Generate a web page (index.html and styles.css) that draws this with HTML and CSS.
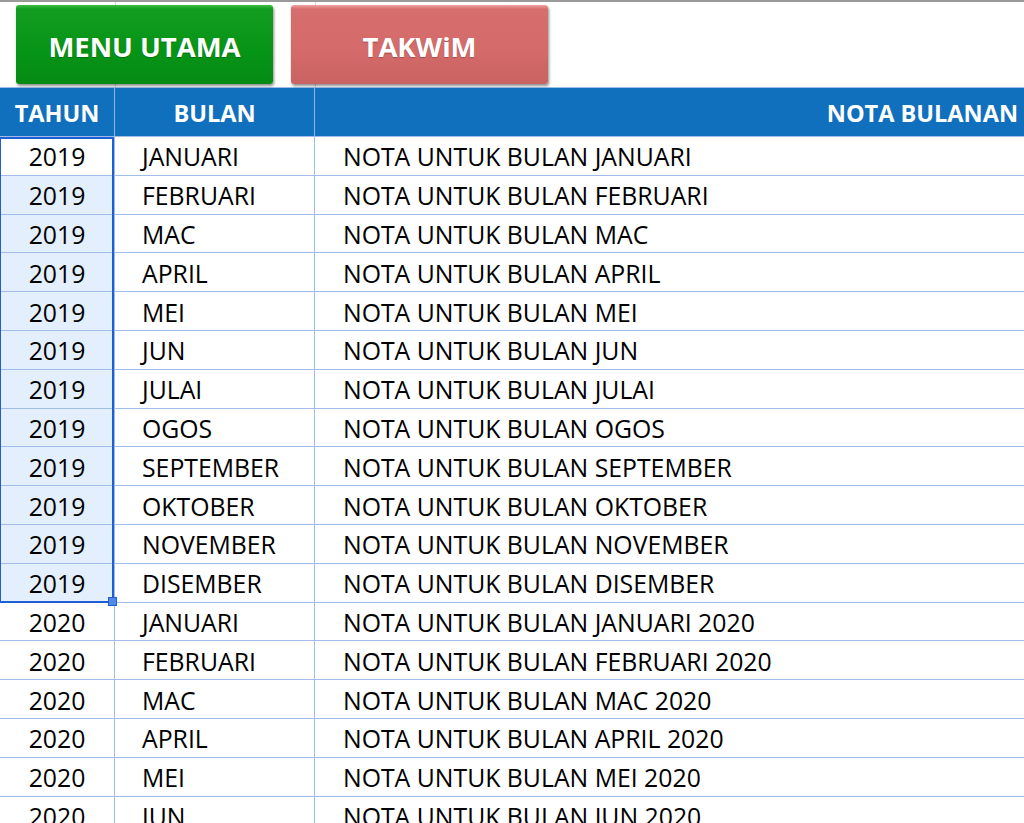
FILE: index.html
```html
<!DOCTYPE html>
<html>
<head>
<meta charset="utf-8">
<link rel="stylesheet" href="styles.css">
</head>
<body>
<div class="sheet">
  <div class="toolbar">
    <div class="gl gl1"></div>
    <div class="gl gl2"></div>
    <button class="btn green">MENU UTAMA</button>
    <button class="btn red">TAKWiM</button>
  </div>
  <div class="table">
    <div class="hd c1">TAHUN</div>
    <div class="hd c2">BULAN</div>
    <div class="hd c3">NOTA BULANAN</div>

    <div class="cell yr">2019</div><div class="cell">JANUARI</div><div class="cell nt">NOTA UNTUK BULAN JANUARI</div>
    <div class="cell yr sel">2019</div><div class="cell">FEBRUARI</div><div class="cell nt">NOTA UNTUK BULAN FEBRUARI</div>
    <div class="cell yr sel">2019</div><div class="cell">MAC</div><div class="cell nt">NOTA UNTUK BULAN MAC</div>
    <div class="cell yr sel">2019</div><div class="cell">APRIL</div><div class="cell nt">NOTA UNTUK BULAN APRIL</div>
    <div class="cell yr sel">2019</div><div class="cell">MEI</div><div class="cell nt">NOTA UNTUK BULAN MEI</div>
    <div class="cell yr sel">2019</div><div class="cell">JUN</div><div class="cell nt">NOTA UNTUK BULAN JUN</div>
    <div class="cell yr sel">2019</div><div class="cell">JULAI</div><div class="cell nt">NOTA UNTUK BULAN JULAI</div>
    <div class="cell yr sel">2019</div><div class="cell">OGOS</div><div class="cell nt">NOTA UNTUK BULAN OGOS</div>
    <div class="cell yr sel">2019</div><div class="cell">SEPTEMBER</div><div class="cell nt">NOTA UNTUK BULAN SEPTEMBER</div>
    <div class="cell yr sel">2019</div><div class="cell">OKTOBER</div><div class="cell nt">NOTA UNTUK BULAN OKTOBER</div>
    <div class="cell yr sel">2019</div><div class="cell">NOVEMBER</div><div class="cell nt">NOTA UNTUK BULAN NOVEMBER</div>
    <div class="cell yr sel">2019</div><div class="cell">DISEMBER</div><div class="cell nt">NOTA UNTUK BULAN DISEMBER</div>
    <div class="cell yr">2020</div><div class="cell">JANUARI</div><div class="cell nt">NOTA UNTUK BULAN JANUARI 2020</div>
    <div class="cell yr">2020</div><div class="cell">FEBRUARI</div><div class="cell nt">NOTA UNTUK BULAN FEBRUARI 2020</div>
    <div class="cell yr">2020</div><div class="cell">MAC</div><div class="cell nt">NOTA UNTUK BULAN MAC 2020</div>
    <div class="cell yr">2020</div><div class="cell">APRIL</div><div class="cell nt">NOTA UNTUK BULAN APRIL 2020</div>
    <div class="cell yr">2020</div><div class="cell">MEI</div><div class="cell nt">NOTA UNTUK BULAN MEI 2020</div>
    <div class="cell yr">2020</div><div class="cell">JUN</div><div class="cell nt">NOTA UNTUK BULAN JUN 2020</div>

    <div class="selection"><div class="handle"></div></div>
  </div>
</div>
</body>
</html>
```
FILE: styles.css
```css
html, body {
  margin: 0;
  padding: 0;
  background: #fff;
  overflow: hidden;
}
body {
  font-family: "Open Sans", "Liberation Sans", sans-serif;
  width: 1024px;
  height: 823px;
}
.sheet {
  width: 1024px;
  height: 823px;
  overflow: hidden;
  border-top: 2px solid #9a9a9a;
  box-sizing: border-box;
}
.toolbar {
  position: relative;
  height: 86px;
  display: flex;
  align-items: flex-start;
  padding: 3px 0 0 16px;
  gap: 18px;
  box-sizing: border-box;
  border-bottom: 1px solid #9fbde6;
}
.gl {
  position: absolute;
  top: 0;
  bottom: 0;
  width: 1px;
  background: #d6d6d6;
}
.gl1 { left: 115px; }
.gl2 { left: 315px; }
.btn {
  position: relative;
  width: 257px;
  height: 79px;
  border: none;
  border-radius: 3px;
  font-family: "Open Sans", "Liberation Sans", sans-serif;
  font-weight: 700;
  font-size: 27.5px;
  color: #fff;
  letter-spacing: 0;
  text-shadow: 0 1px 1px rgba(0,0,0,0.25);
  box-shadow: 1px 2px 3px rgba(0,0,0,0.45);
  padding: 5px 0 0 0;
  line-height: 1;
}
.green {
  background: linear-gradient(#3fbf45 0px, #139d20 4px, #069416 60%, #058a14 100%);
}
.red {
  background: linear-gradient(#f0a3a3 0px, #d76e6e 4px, #d46a6a 60%, #c96262 100%);
}
.table {
  position: relative;
  display: grid;
  grid-template-columns: 115px 200px 1fr;
  grid-auto-rows: 38.8px;
  grid-template-rows: 49px;
}
.hd {
  background: #1170be;
  color: #fff;
  font-weight: 700;
  font-size: 23.5px;
  display: flex;
  align-items: center;
  justify-content: center;
  padding-top: 1px;
  border-right: 1px solid #8fb7e3;
  border-bottom: 1px solid #9fbde6;
}
.hd.c3 {
  justify-content: flex-end;
  padding-right: 6px;
  border-right: none;
  white-space: nowrap;
}
.cell {
  font-size: 24.8px;
  color: #000;
  display: flex;
  align-items: center;
  padding-left: 27px;
  padding-top: 1px;
  border-right: 1px solid #9fbde6;
  border-bottom: 1px solid #9fbde6;
  white-space: nowrap;
  overflow: hidden;
}
.cell.yr {
  justify-content: center;
  padding-left: 0;
}
.cell.nt {
  padding-left: 28px;
  border-right: none;
}
.cell.sel {
  background: #e3effc;
}
.selection {
  position: absolute;
  left: 0;
  top: 49px;
  width: 115px;
  height: 465.6px;
  border: 2px solid #1e5fd5;
  box-sizing: border-box;
  margin-left: -1px;
}
.handle {
  position: absolute;
  right: -5px;
  bottom: -5px;
  width: 7px;
  height: 7px;
  background: #4f8ae6;
  border: 1px solid #1e5fd5;
}
```
